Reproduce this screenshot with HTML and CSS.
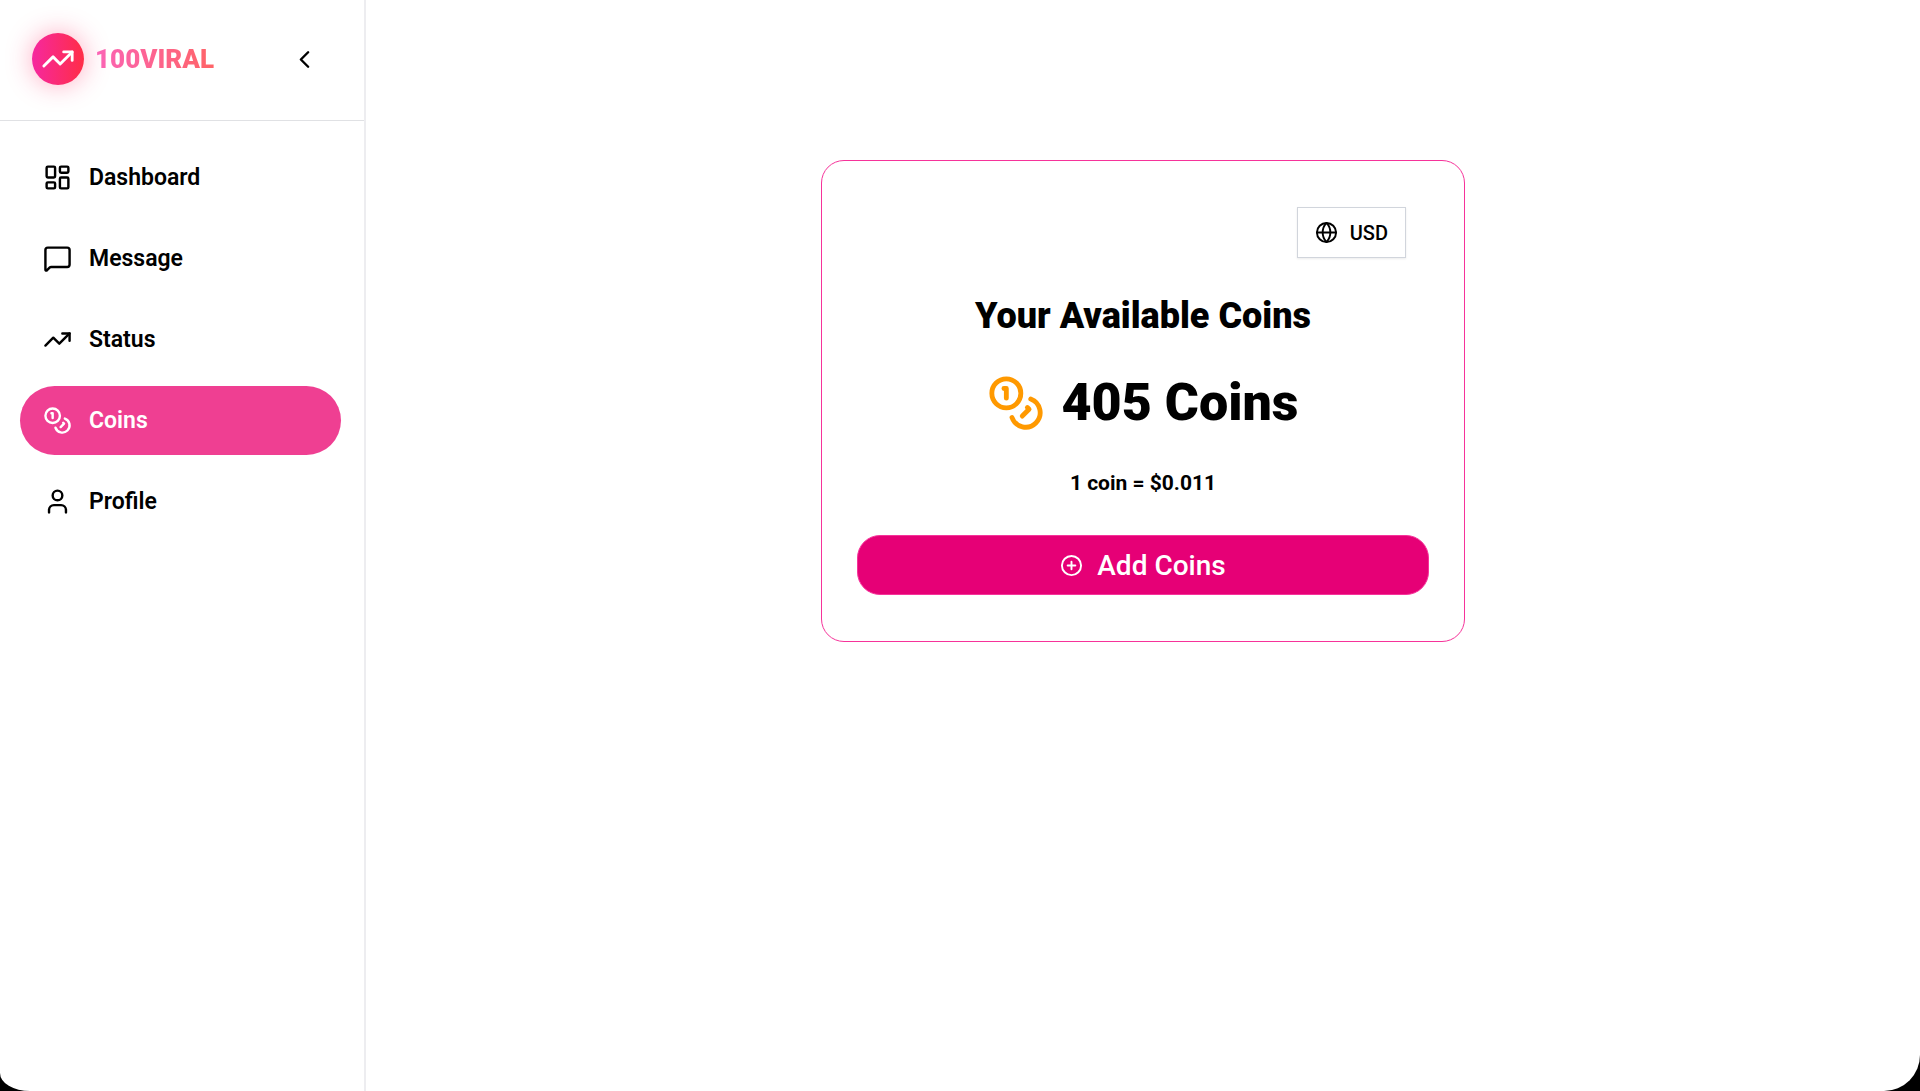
FILE: index.html
```html
<!DOCTYPE html>
<html lang="en">
<head>
  <meta charset="UTF-8" />
  <meta name="viewport" content="width=device-width, initial-scale=1.0" />
  <title>100VIRAL - Coins</title>
  <link rel="stylesheet" href="styles.css">
</head>
<body>

<div class="app">

  <aside class="sidebar">
    <div class="sidebar-header">
      <a class="brand" href="#">
        <span class="brand-logo">
          <svg class="icon" viewBox="0 0 24 24"><path d="M22 7 13.5 15.5 8.5 10.5 2 17"/><path d="M16 7h6v6"/></svg>
        </span>
        <span class="brand-name">100VIRAL</span>
      </a>
      <button class="collapse-btn" type="button" aria-label="Collapse sidebar">
        <svg class="icon" viewBox="0 0 24 24"><path d="m15 18-6-6 6-6"/></svg>
      </button>
    </div>

    <nav class="nav">
      <a class="nav-link" href="#">
        <svg class="icon" viewBox="0 0 24 24"><rect x="3" y="3" width="7" height="9" rx="1"/><rect x="14" y="3" width="7" height="5" rx="1"/><rect x="14" y="12" width="7" height="9" rx="1"/><rect x="3" y="16" width="7" height="5" rx="1"/></svg>
        Dashboard
      </a>
      <a class="nav-link" href="#">
        <svg class="icon" viewBox="0 0 24 24"><path d="M22 17a2 2 0 0 1-2 2H6.828a2 2 0 0 0-1.414.586l-2.202 2.202A.71.71 0 0 1 2 21.286V5a2 2 0 0 1 2-2h16a2 2 0 0 1 2 2z"/></svg>
        Message
      </a>
      <a class="nav-link" href="#">
        <svg class="icon" viewBox="0 0 24 24"><path d="M22 7 13.5 15.5 8.5 10.5 2 17"/><path d="M16 7h6v6"/></svg>
        Status
      </a>
      <a class="nav-link active" href="#" aria-current="page">
        <svg class="icon" viewBox="0 0 24 24"><circle cx="8" cy="8" r="6"/><path d="M18.09 10.37A6 6 0 1 1 10.34 18"/><path d="M7 6h1v4"/><path d="m16.71 13.88.7.71-2.82 2.82"/></svg>
        Coins
      </a>
      <a class="nav-link" href="#">
        <svg class="icon" viewBox="0 0 24 24"><path d="M19 21v-2a4 4 0 0 0-4-4H9a4 4 0 0 0-4 4v2"/><circle cx="12" cy="7" r="4"/></svg>
        Profile
      </a>
    </nav>
  </aside>

  <main class="content">
    <section class="coin-card">
      <button class="currency-btn" type="button">
        <svg class="icon" viewBox="0 0 24 24"><circle cx="12" cy="12" r="10"/><path d="M12 2a14.5 14.5 0 0 0 0 20 14.5 14.5 0 0 0 0-20"/><path d="M2 12h20"/></svg>
        USD
      </button>

      <h1>Your Available Coins</h1>

      <div class="balance">
        <svg class="icon" viewBox="0 0 24 24"><circle cx="8" cy="8" r="6"/><path d="M18.09 10.37A6 6 0 1 1 10.34 18"/><path d="M7 6h1v4"/><path d="m16.71 13.88.7.71-2.82 2.82"/></svg>
        <span>405 Coins</span>
      </div>

      <p class="rate">1 coin = $0.011</p>

      <button class="add-btn" type="button">
        <svg class="icon" viewBox="0 0 24 24"><circle cx="12" cy="12" r="10"/><path d="M8 12h8"/><path d="M12 8v8"/></svg>
        Add Coins
      </button>
    </section>
  </main>

</div>

</body>
</html>
```
FILE: styles.css
```css
* {
  box-sizing: border-box;
}

body {
  font-family: Roboto, "Open Sans", sans-serif;
  background: #000;
  margin: 0;
  color: #000;
}

a {
  color: inherit;
  text-decoration: none;
}

button {
  font-family: inherit;
  color: inherit;
  cursor: pointer;
}

.icon {
  display: block;
  flex-shrink: 0;
  width: 29px;
  height: 29px;
  fill: none;
  stroke: currentColor;
  stroke-width: 2;
  stroke-linecap: round;
  stroke-linejoin: round;
}

.app {
  display: flex;
  min-height: 100vh;
  background: #fff;
  border-radius: 0 0 36px 30px / 0 0 36px 18px;
  overflow: hidden;
}

/* Sidebar */
.sidebar {
  flex-shrink: 0;
  width: 366px;
  border-right: 2px solid #ededf0;
}

.sidebar-header {
  display: flex;
  align-items: center;
  justify-content: space-between;
  height: 121px;
  padding: 0 31px 2px 32px;
  border-bottom: 1px solid #e0e1e4;
}

.brand {
  display: flex;
  align-items: center;
  gap: 11px;
}

.brand-logo {
  display: flex;
  align-items: center;
  justify-content: center;
  width: 52px;
  height: 52px;
  border-radius: 50%;
  background: linear-gradient(to right, #f6289f, #ff2d47);
  box-shadow: 0 0 27px rgba(255, 45, 100, 0.4);
  color: #fff;
}

.brand-logo .icon {
  width: 34px;
  height: 34px;
}

.brand-name {
  font-size: 26px;
  font-weight: 900;
  background: linear-gradient(to right, #fb64b6, #ff6467);
  -webkit-background-clip: text;
  background-clip: text;
  color: transparent;
}

.collapse-btn {
  padding: 14px;
  border: none;
  background: none;
}

.nav {
  display: flex;
  flex-direction: column;
  gap: 12px;
  padding: 22px 23px 22px 20px;
}

.nav-link {
  display: flex;
  align-items: center;
  gap: 17px;
  height: 69px;
  padding: 0 23px;
  border-radius: 35px;
  font-size: 23px;
  font-weight: 600;
}

.nav-link.active {
  background: #ef3f92;
  color: #fff;
}

/* Coins card */
.content {
  flex: 1;
  padding: 160px 24px 24px;
}

.coin-card {
  display: flex;
  flex-direction: column;
  align-items: center;
  gap: 35px;
  max-width: 644px;
  margin: 0 auto;
  padding: 46px 35px;
  border: 1px solid #f6339a;
  border-radius: 23px;
}

.currency-btn {
  display: flex;
  align-items: center;
  align-self: flex-end;
  gap: 12px;
  height: 51px;
  margin-right: 23px;
  padding: 0 17px;
  border: 1px solid #d1d5dc;
  background: #fff;
  box-shadow: 0 1px 2px rgba(0, 0, 0, 0.08);
  font-size: 20px;
  font-weight: 500;
}

.currency-btn .icon,
.add-btn .icon {
  width: 23px;
  height: 23px;
}

h1 {
  margin: 0;
  font-size: 36px;
  line-height: 46px;
  font-weight: 900;
}

.balance {
  display: flex;
  align-items: center;
  gap: 16px;
  font-size: 52px;
  line-height: 58px;
  font-weight: 900;
}

.balance .icon {
  width: 58px;
  height: 58px;
  color: #ff9900;
}

.rate {
  margin: 0;
  font-size: 21px;
  line-height: 33px;
  font-weight: 700;
}

.add-btn {
  display: flex;
  align-items: center;
  align-self: stretch;
  justify-content: center;
  gap: 14px;
  height: 60px;
  border: 1px solid #f6339a;
  border-radius: 23px;
  background: #e60076;
  color: #fff;
  font-size: 28px;
  font-weight: 500;
}
```
